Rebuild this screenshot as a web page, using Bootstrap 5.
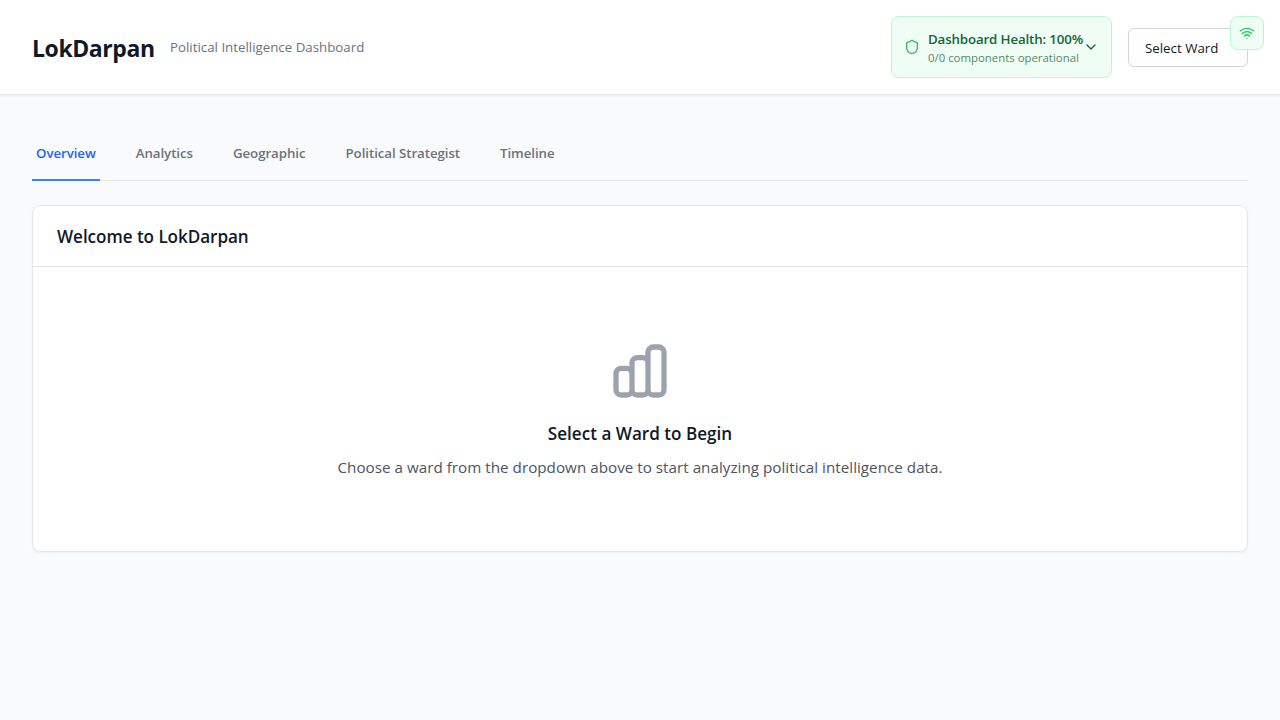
<!DOCTYPE html>
<html lang="en">
<head>
<meta charset="utf-8">
<meta name="viewport" content="width=device-width, initial-scale=1">
<title>LokDarpan</title>
<link rel="stylesheet" href="https://cdn.jsdelivr.net/npm/bootstrap@5.3.0/dist/css/bootstrap.min.css">
<style>
body{background:#f9fafb;color:#111827;font-family:"Open Sans","Noto Sans",sans-serif;font-size:13.3px;line-height:20px;min-height:100vh}
body *{white-space:nowrap}
svg{fill:none;stroke:currentColor;stroke-width:2;stroke-linecap:round;stroke-linejoin:round;flex:none}
.topbar{height:95px;background:#fff;border-bottom:1px solid #e5e7eb;box-shadow:0 1px 2px rgba(0,0,0,.05)}
.brand{font-size:23px;font-weight:700;line-height:32px;width:122px;letter-spacing:-.42px;margin:2px 0 0}
.tagline{color:#6b7280}
.health{width:221px;height:62px;background:#f0fdf4;border:1px solid #bbf7d0;border-radius:8px;color:#166534;padding:0 12px}
.health-title{font-weight:600;line-height:20px;width:155px;letter-spacing:-.14px}
.health-sub{font-size:11.4px;line-height:16px;padding-top:1px;margin-bottom:-1px;opacity:.75}
.ward{width:120px;height:39px;border:1px solid #d1d5db;border-radius:6px;background:#fff;padding:1px 1px 0 16px;font-size:13.3px;color:#111827}
.online{top:16px;right:16px;width:34px;height:34px;background:#f0fdf4;border:1px solid #bbf7d0;border-radius:8px;color:#22c55e}
.tabs{height:54px;margin-top:32px;border-bottom:1px solid #e5e7eb;gap:32px}
.tabs .nav-link{height:54px;padding:16px 4px;border-bottom:2px solid transparent;color:#6b7280;font-weight:600;line-height:20px;letter-spacing:-.07px}
.tabs .nav-link.active{color:#2563eb;border-color:#3b82f6}
.panel{height:347px;margin-top:24px;border:1px solid #e5e7eb;border-radius:8px;box-shadow:0 1px 2px rgba(0,0,0,.05)}
.panel .card-header{height:61px;padding:17px 24px 15px;background:#fff;border-bottom:1px solid #e5e7eb;border-radius:7px 7px 0 0}
.panel h2,.panel h3{font-size:17.1px;font-weight:600;line-height:28px;margin:0}
.panel h2{letter-spacing:-.05px}
.panel h3{padding-top:1px;margin-bottom:-1px}
.lede{font-size:15.2px;line-height:24px;letter-spacing:.025px;color:#4b5563;margin:8px 0 0}
</style>
</head>
<body>
<header class="topbar d-flex align-items-center justify-content-between px-4">
  <div class="d-flex align-items-center gap-3 ps-2">
    <h1 class="brand">LokDarpan</h1>
    <span class="tagline">Political Intelligence Dashboard</span>
  </div>
  <div class="d-flex align-items-center gap-3 pe-2">
    <div class="health d-flex align-items-center">
      <svg width="16" height="16" viewBox="0 0 24 24" color="#22c55e"><path d="M20 13c0 5-3.5 7.5-7.66 8.95a1 1 0 0 1-.67-.01C7.5 20.5 4 18 4 13V6a1 1 0 0 1 1-1c2 0 4.5-1.2 6.24-2.72a1.17 1.17 0 0 1 1.52 0C14.51 3.81 17 5 19 5a1 1 0 0 1 1 1z"/></svg>
      <div class="ms-2"><div class="health-title">Dashboard Health: 100%</div><div class="health-sub">0/0 components operational</div></div>
      <svg width="16" height="16" viewBox="0 0 24 24"><path d="m6 9 6 6 6-6"/></svg>
    </div>
    <button class="ward d-flex align-items-center justify-content-between" type="button">Select Ward
      <svg width="16" height="16" viewBox="0 0 24 24"><path d="m8 9.7 4 4 4-4"/></svg>
    </button>
  </div>
</header>
<div class="online position-absolute d-flex align-items-center justify-content-center">
  <svg width="16" height="16" viewBox="0 0 24 24"><path d="M12 20h.01M2 8.82a15 15 0 0 1 20 0M5 12.859a10 10 0 0 1 14 0M8.5 16.429a5 5 0 0 1 7 0"/></svg>
</div>
<main class="px-4"><div class="px-2">
  <nav class="tabs nav flex-nowrap">
    <a class="nav-link active" href="#">Overview</a>
    <a class="nav-link" href="#">Analytics</a>
    <a class="nav-link" href="#">Geographic</a>
    <a class="nav-link" href="#">Political Strategist</a>
    <a class="nav-link" href="#">Timeline</a>
  </nav>
  <section class="panel card">
    <div class="card-header"><h2>Welcome to LokDarpan</h2></div>
    <div class="card-body d-flex flex-column align-items-center justify-content-center">
      <svg class="mb-3" width="64" height="64" viewBox="0 0 24 24" color="#9ca3af"><path d="M9 19v-6a2 2 0 00-2-2H5a2 2 0 00-2 2v6a2 2 0 002 2h2a2 2 0 002-2zm0 0V9a2 2 0 012-2h2a2 2 0 012 2v10m-6 0a2 2 0 002 2h2a2 2 0 002-2m0 0V5a2 2 0 012-2h2a2 2 0 012 2v14a2 2 0 01-2 2h-2a2 2 0 01-2-2z"/></svg>
      <h3>Select a Ward to Begin</h3>
      <p class="lede">Choose a ward from the dropdown above to start analyzing political intelligence data.</p>
    </div>
  </section>
</div></main>
<script src="https://cdn.jsdelivr.net/npm/bootstrap@5.3.0/dist/js/bootstrap.bundle.min.js"></script>
</body>
</html>
